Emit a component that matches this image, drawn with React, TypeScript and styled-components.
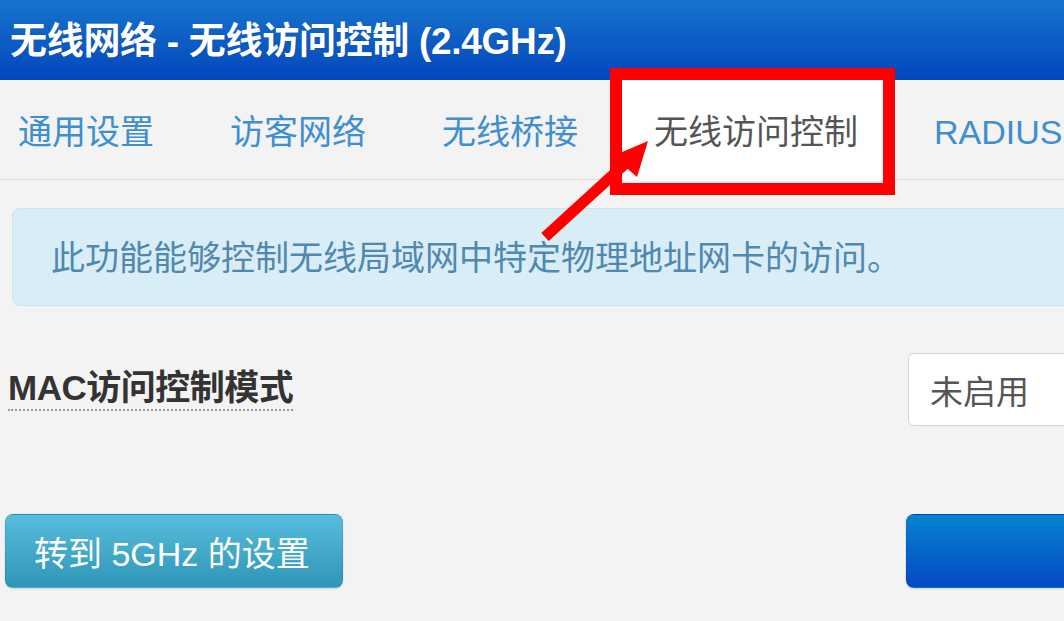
import React, { useState } from 'react';
import styled, { createGlobalStyle } from 'styled-components';

const tabs = ['通用设置', '访客网络', '无线桥接', '无线访问控制', 'RADIUS 服务器'];

const App = () => {
  const [active, setActive] = useState(3);
  return (
    <>
      <GlobalStyle />
      <Page>
        <Header>无线网络 - 无线访问控制 (2.4GHz)</Header>
        <TabBar>
          <TabList>
            {tabs.map((t, i) => (
              <Tab key={t} $active={i === active} onClick={() => setActive(i)}>
                {t}
              </Tab>
            ))}
          </TabList>
        </TabBar>
        <Body>
          <InfoBox>此功能能够控制无线局域网中特定物理地址网卡的访问。</InfoBox>
          <FormRow>
            <Label>MAC访问控制模式</Label>
            <Select>未启用</Select>
          </FormRow>
          <ButtonRow>
            <InfoButton>转到 5GHz 的设置</InfoButton>
            <PrimaryButton>保存并应用</PrimaryButton>
          </ButtonRow>
        </Body>

        {/* annotation drawn over the page */}
        <Highlight />
        <Arrow width='1064' height='621' viewBox='0 0 1064 621'>
          <line x1='545' y1='237' x2='626' y2='163' stroke='#f00' strokeWidth='11' />
          <polygon points='648,141 613,156 637,177' fill='#f00' />
        </Arrow>
      </Page>
    </>
  );
};

export default App;

const GlobalStyle = createGlobalStyle`
  html, body {
    margin: 0;
    padding: 0;
    background: #f3f3f3;
    overflow: hidden;
  }
  body {
    font-family: 'Liberation Sans', 'Noto Sans CJK SC', sans-serif;
  }
`;

const Page = styled.div`
  position: relative;
  width: 1064px;
  height: 621px;
  overflow: hidden;
  background: #f3f3f3;
`;

const Header = styled.div`
  width: 1300px;
  height: 80px;
  box-sizing: border-box;
  padding: 0 0 4px 10px;
  display: flex;
  align-items: center;
  background: linear-gradient(#1674cc, #0446bd);
  color: #fff;
  font-size: 37px;
  font-weight: 700;
  letter-spacing: -0.3px;
  text-shadow: 0 0 1px rgba(0, 0, 0, 0.25);
`;

const TabBar = styled.nav`
  width: 1300px;
  height: 99px;
  border-bottom: 1px solid #dcdcdc;
  background: #f3f3f3;
`;

const TabList = styled.ul`
  display: flex;
  height: 100px;
  margin: 0 0 0 -20px;
  padding: 0;
  list-style: none;
`;

const Tab = styled.li<{ $active?: boolean }>`
  display: flex;
  align-items: center;
  padding: 0 38px 2px;
  height: 100%;
  box-sizing: border-box;
  font-size: 34px;
  white-space: nowrap;
  color: ${(p) => (p.$active ? '#555' : '#3f8fcf')};
  background: ${(p) => (p.$active ? '#fff' : 'transparent')};
  cursor: pointer;
`;

const Body = styled.div`
  width: 1300px;
  padding: 28px 0 0 10px;
`;

const InfoBox = styled.div`
  height: 98px;
  box-sizing: border-box;
  padding: 0 0 4px 38px;
  display: flex;
  align-items: center;
  margin-left: 2px;
  background: #d9edf7;
  border: 1px solid #c4e6f0;
  border-radius: 8px;
  color: #5088b0;
  font-size: 34px;
`;

const FormRow = styled.div`
  display: flex;
  align-items: center;
  justify-content: space-between;
  width: 1200px;
  margin-top: 47px;
  margin-left: -2px;
`;

const Label = styled.span`
  font-size: 35px;
  font-weight: 700;
  color: #333;
  letter-spacing: -0.5px;
  line-height: 1.15;
  border-bottom: 2px dotted #999;
`;

const Select = styled.div`
  width: 300px;
  height: 73px;
  box-sizing: border-box;
  display: flex;
  align-items: center;
  padding-left: 21px;
  background: #fff;
  border: 1px solid #d4d4d4;
  border-radius: 6px;
  color: #555;
  font-size: 33px;
`;

const ButtonRow = styled.div`
  display: flex;
  justify-content: space-between;
  width: 1241px;
  margin-top: 88px;
  margin-left: -5px;
`;

const BaseButton = styled.button`
  height: 74px;
  border: 1px solid rgba(0, 0, 0, 0.08);
  border-radius: 8px;
  color: #fff;
  font-family: inherit;
  font-size: 34px;
  display: flex;
  align-items: center;
  white-space: nowrap;
  box-shadow: 0 1px 2px rgba(0, 0, 0, 0.15);
`;

const InfoButton = styled(BaseButton)`
  width: 338px;
  padding: 0 0 0 28px;
  background: linear-gradient(#56bddc, #2f96b8);
`;

const PrimaryButton = styled(BaseButton)`
  width: 340px;
  padding: 0 0 0 190px;
  background: linear-gradient(#0584cf, #0448c4);
`;

const Highlight = styled.div`
  position: absolute;
  left: 610px;
  top: 68px;
  width: 285px;
  height: 127px;
  box-sizing: border-box;
  border: 12px solid #f00;
  pointer-events: none;
`;

const Arrow = styled.svg`
  position: absolute;
  left: 0;
  top: 0;
  pointer-events: none;
`;
